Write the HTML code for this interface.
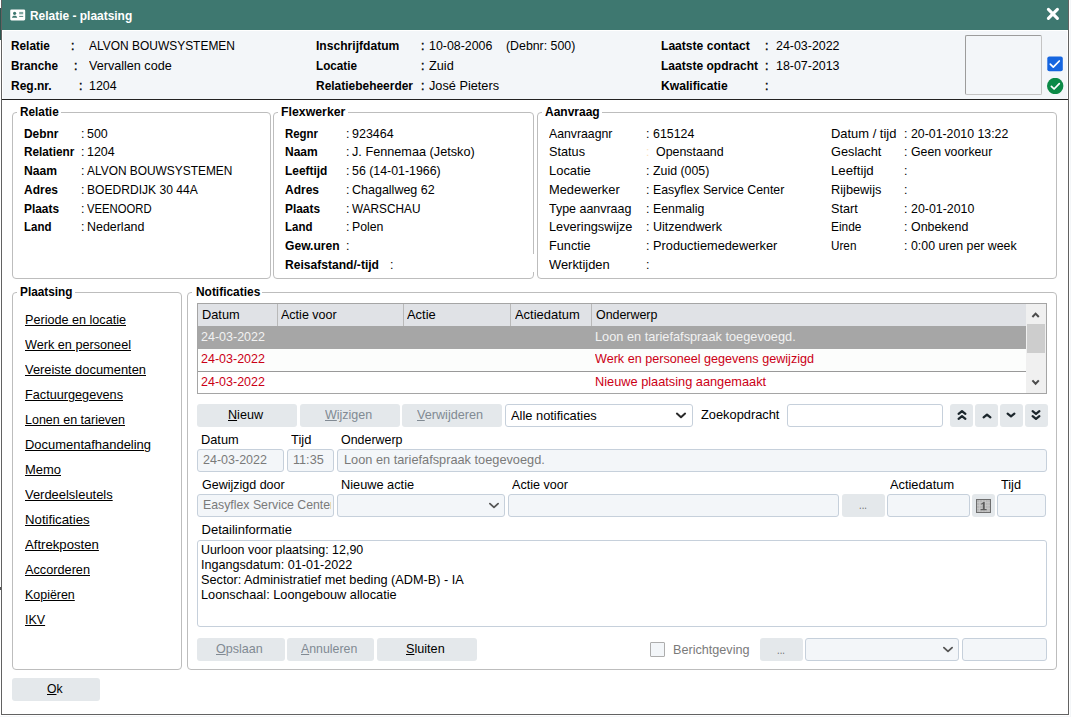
<!DOCTYPE html><html lang="nl"><head><meta charset="utf-8"><title>Relatie - plaatsing</title><style>
html,body{margin:0;padding:0}
body{width:1071px;height:717px;position:relative;overflow:hidden;background:#fff;font-family:"Liberation Sans",sans-serif;color:#000}
body>div,body>svg{position:absolute;box-sizing:border-box}
.t{position:absolute;white-space:pre;transform-origin:0 50%;display:block}
.clip{position:absolute;overflow:hidden}
u{text-decoration:underline;text-underline-offset:1px}

</style></head><body>
<div style="left:0px;top:8px;width:1px;height:32px;background:#2b5750"></div>
<div style="left:0px;top:587px;width:1px;height:3px;background:#555"></div>
<div style="left:1px;top:0px;width:1px;height:715px;background:#626262"></div>
<div style="left:1068px;top:0px;width:1px;height:715px;background:#626262"></div>
<div style="left:1px;top:713.6px;width:1068px;height:1.4px;background:#626262"></div>
<div style="left:1070px;top:0px;width:1px;height:717px;background:#f4f6f8"></div>
<div style="left:0px;top:715.5px;width:1071px;height:1.5px;background:#f4f6f8"></div>
<div style="left:2px;top:0px;width:1066px;height:30px;background:#3e7870"></div>
<div style="left:3px;top:31px;width:1064px;height:68px;background:#f3f6f9"></div>
<div style="left:2px;top:99px;width:1066px;height:1px;background:#222"></div>
<div style="left:965px;top:35px;width:77px;height:60px;border:1px solid;border-color:#9c9c9c #c4c4c4 #c4c4c4 #9c9c9c;border-radius:2px;background:#f3f6f9"></div>
<div style="left:12px;top:112px;width:259px;height:167px;border:1px solid #bdbdbd;border-radius:4px"></div>
<div style="left:16.8px;top:111px;width:44.7px;height:4px;background:#fff"></div>
<div style="left:273px;top:112px;width:261px;height:167px;border:1px solid #bdbdbd;border-radius:4px"></div>
<div style="left:277.8px;top:111px;width:70.4px;height:4px;background:#fff"></div>
<div style="left:532px;top:253.7px;width:3px;height:18.8px;background:#fff"></div>
<div style="left:537px;top:112px;width:519.5px;height:167px;border:1px solid #bdbdbd;border-radius:4px"></div>
<div style="left:541.8px;top:111px;width:60.7px;height:4px;background:#fff"></div>
<div style="left:12px;top:292px;width:170px;height:377.5px;border:1px solid #bdbdbd;border-radius:4px"></div>
<div style="left:16.8px;top:291px;width:58.5px;height:4px;background:#fff"></div>
<div style="left:187px;top:292px;width:869.5px;height:377.5px;border:1px solid #bdbdbd;border-radius:4px"></div>
<div style="left:192.2px;top:291px;width:70.3px;height:4px;background:#fff"></div>
<div style="left:197px;top:303px;width:850px;height:91px;border:1px solid #a5a5a5;background:#fff"></div>
<div style="left:198px;top:304px;width:828px;height:22px;background:#e0e2e6"></div>
<div style="left:276.5px;top:304px;width:1.0px;height:22px;background:#b9b9b9"></div>
<div style="left:402.5px;top:304px;width:1.0px;height:22px;background:#b9b9b9"></div>
<div style="left:510.3px;top:304px;width:1.0px;height:22px;background:#b9b9b9"></div>
<div style="left:591.3px;top:304px;width:1.0px;height:22px;background:#b9b9b9"></div>
<div style="left:198px;top:326px;width:828px;height:22.5px;background:#a6a6a6"></div>
<div style="left:198px;top:348.5px;width:828px;height:22.5px;background:#fcfdfc"></div>
<div style="left:198px;top:371px;width:828px;height:1px;background:#999"></div>
<div style="left:1026px;top:304px;width:20px;height:89px;background:#f0f0f0"></div>
<div style="left:1027px;top:324px;width:18px;height:29px;background:#cdcdcd"></div>
<div style="left:197.3px;top:404.3px;width:99.4px;height:22.4px;background:#e4e8eb;border-radius:3px"></div>
<div style="left:300px;top:404.3px;width:99.7px;height:22.4px;background:#e4e8eb;border-radius:3px"></div>
<div style="left:402.3px;top:404.3px;width:99.4px;height:22.4px;background:#e4e8eb;border-radius:3px"></div>
<div style="left:505.3px;top:404.3px;width:187.4px;height:22.4px;background:#fff;border:1px solid #c6d0db;border-radius:3px"></div>
<div style="left:787.3px;top:404.3px;width:155.4px;height:22.4px;background:#fff;border:1px solid #c6d0db;border-radius:3px"></div>
<div style="left:950px;top:404.3px;width:23px;height:22.4px;background:#e4e8eb;border-radius:3px"></div>
<div style="left:975px;top:404.3px;width:23px;height:22.4px;background:#e4e8eb;border-radius:3px"></div>
<div style="left:1000px;top:404.3px;width:23px;height:22.4px;background:#e4e8eb;border-radius:3px"></div>
<div style="left:1025px;top:404.3px;width:23px;height:22.4px;background:#e4e8eb;border-radius:3px"></div>
<div style="left:197.3px;top:449.3px;width:87.0px;height:22.4px;background:#f3f6f9;border:1px solid #c6d0db;border-radius:3px"></div>
<div style="left:287.3px;top:449.3px;width:47.0px;height:22.4px;background:#f3f6f9;border:1px solid #c6d0db;border-radius:3px"></div>
<div style="left:337.3px;top:449.3px;width:709.4px;height:22.4px;background:#f3f6f9;border:1px solid #c6d0db;border-radius:3px"></div>
<div style="left:197px;top:494px;width:137.3px;height:22.5px;background:#f3f6f9;border:1px solid #c6d0db;border-radius:3px"></div>
<div style="left:337.3px;top:494px;width:167.9px;height:22.5px;background:#f3f6f9;border:1px solid #c6d0db;border-radius:3px"></div>
<div style="left:508px;top:494px;width:330.7px;height:22.5px;background:#f3f6f9;border:1px solid #c6d0db;border-radius:3px"></div>
<div style="left:842.2px;top:494px;width:42.4px;height:22.5px;background:#e4e8eb;border-radius:3px"></div>
<div style="left:887.3px;top:494px;width:82.4px;height:22.5px;background:#f3f6f9;border:1px solid #c6d0db;border-radius:3px"></div>
<div style="left:972.4px;top:494px;width:22.4px;height:22.5px;background:#e4e8eb;border-radius:3px"></div>
<div style="left:997.3px;top:494px;width:48.5px;height:22.5px;background:#f3f6f9;border:1px solid #c6d0db;border-radius:3px"></div>
<div style="left:197px;top:540px;width:849.5px;height:87px;background:#fff;border:1px solid #c6d0db;border-radius:3px"></div>
<div style="left:197px;top:638.2px;width:87.6px;height:22.4px;background:#e4e8eb;border-radius:3px"></div>
<div style="left:287.4px;top:638.2px;width:86.8px;height:22.4px;background:#e4e8eb;border-radius:3px"></div>
<div style="left:377px;top:638.2px;width:100px;height:22.4px;background:#e4e8eb;border-radius:3px"></div>
<div style="left:650px;top:642.3px;width:15px;height:15.0px;background:#f3f6f9;border:1px solid #adadad;border-radius:1px"></div>
<div style="left:760.2px;top:638.2px;width:42.4px;height:22.4px;background:#e4e8eb;border-radius:3px"></div>
<div style="left:805.3px;top:638.2px;width:154.0px;height:22.4px;background:#f3f6f9;border:1px solid #c6d0db;border-radius:3px"></div>
<div style="left:962px;top:638.2px;width:84.5px;height:22.4px;background:#f3f6f9;border:1px solid #c6d0db;border-radius:3px"></div>
<div style="left:12px;top:677.8px;width:88px;height:23.2px;background:#e4e8eb;border-radius:3px"></div>
<svg style="left:10px;top:9px" width="16" height="12" viewBox="0 0 16 12"><rect x="0.2" y="0.4" width="15" height="11" rx="1.3" fill="#fff"/><circle cx="4.6" cy="4.3" r="1.6" fill="#3e7870"/><path d="M2 8.8c0-1.5 1.1-2.1 2.6-2.1s2.6.6 2.6 2.1z" fill="#3e7870"/><rect x="9.2" y="2.9" width="4" height="2.4" fill="#7fa7a1"/><rect x="9.2" y="6.9" width="4" height="0.9" fill="#3e7870"/></svg>
<svg style="left:1045px;top:6px" width="16" height="16" viewBox="0 0 16 16"><path d="M3.4 3.4l9 9M12.4 3.4l-9 9" stroke="#fff" stroke-width="3.1" stroke-linecap="round" fill="none"/></svg>
<svg style="left:1047px;top:56px" width="16" height="16" viewBox="0 0 16 16"><rect x="0.3" y="0.5" width="15.5" height="14.8" rx="2" fill="#1565e0"/><path d="M3.3 8.2l3 3 6-6.2" stroke="#fff" stroke-width="1.7" fill="none" stroke-linecap="round" stroke-linejoin="round"/></svg>
<svg style="left:1047px;top:78px" width="17" height="16" viewBox="0 0 17 16"><circle cx="8.2" cy="8" r="8.2" fill="#0b8a47"/><path d="M4.4 8.3l2.7 2.7 5.2-5.4" stroke="#fff" stroke-width="1.7" fill="none" stroke-linecap="round" stroke-linejoin="round"/></svg>
<svg style="left:1030px;top:310px" width="12" height="8" viewBox="0 0 12 8"><path d="M2.4 7L5.6 3.6L8.8 7" stroke="#4c4c4c" stroke-width="2" fill="none"/></svg>
<svg style="left:1030px;top:378px" width="12" height="8" viewBox="0 0 12 8"><path d="M2.4 2.4L5.6 5.8L8.8 2.4" stroke="#4c4c4c" stroke-width="2" fill="none"/></svg>
<svg style="left:672.8px;top:410.4px" width="16" height="12" viewBox="0 0 16 12"><path d="M3.9000000000000004 3.6l4.1 3.6999999999999997 4.1-3.6999999999999997" stroke="#2a2a2a" stroke-width="2" fill="none" stroke-linecap="round" stroke-linejoin="round"/></svg>
<svg style="left:953.5px;top:406.9px" width="16" height="16" viewBox="-8 -8 16 16"><path d="M-3.4 -1.1L0 -3.9L3.4 -1.1M-3.4 3.9L0 1.1L3.4 3.9" stroke="#1c262c" stroke-width="2.2" fill="none" stroke-linecap="round" stroke-linejoin="round"/></svg>
<svg style="left:978.5px;top:407.6px" width="16" height="16" viewBox="-8 -8 16 16"><path d="M-3.4 1.4L0 -1.4L3.4 1.4" stroke="#1c262c" stroke-width="2.2" fill="none" stroke-linecap="round" stroke-linejoin="round"/></svg>
<svg style="left:1003.4px;top:407.3px" width="16" height="16" viewBox="-8 -8 16 16"><path d="M-3.4 -1.4L0 1.4L3.4 -1.4" stroke="#1c262c" stroke-width="2.2" fill="none" stroke-linecap="round" stroke-linejoin="round"/></svg>
<svg style="left:1028.4px;top:406.8px" width="16" height="16" viewBox="-8 -8 16 16"><path d="M-3.4 -3.9L0 -1.1L3.4 -3.9M-3.4 1.1L0 3.9L3.4 1.1" stroke="#1c262c" stroke-width="2.2" fill="none" stroke-linecap="round" stroke-linejoin="round"/></svg>
<svg style="left:486.3px;top:499.6px" width="16" height="12" viewBox="0 0 16 12"><path d="M3.9000000000000004 3.6l4.1 3.6999999999999997 4.1-3.6999999999999997" stroke="#555" stroke-width="1.8" fill="none" stroke-linecap="round" stroke-linejoin="round"/></svg>
<svg style="left:976px;top:499px" width="15" height="14" viewBox="0 0 15 14"><rect x="0.5" y="0.5" width="14" height="13" fill="#b7b7b7" stroke="#6e6e6e"/><path d="M3.5 1v12M6.5 1v12M9.5 1v12M12 1v12M1 3.5h13M1 6.5h13M1 9.5h13M1 12h13" stroke="#cdcdcd" stroke-width="0.6"/><path d="M5.3 4.6l2.2-1.6h1.2v7h1.9v1.2H4.6V10h2.2V4.8l-1.5 1z" fill="#5c5c5c"/></svg>
<svg style="left:940.1px;top:644.2px" width="16" height="12" viewBox="0 0 16 12"><path d="M3.9000000000000004 3.6l4.1 3.6999999999999997 4.1-3.6999999999999997" stroke="#555" stroke-width="1.8" fill="none" stroke-linecap="round" stroke-linejoin="round"/></svg>
<span id="t0" class="t" style="left:30px;top:9.0px;font-size:13px;line-height:13px;font-weight:bold;color:#fff;transform:scaleX(0.9187);">Relatie - plaatsing</span>
<span id="t1" class="t" style="left:11px;top:39.0px;font-size:13px;line-height:13px;font-weight:bold;transform:scaleX(0.9099);">Relatie</span>
<span id="t2" class="t" style="left:71.1px;top:39.0px;font-size:13px;line-height:13px;-webkit-text-stroke:0.45px #000;transform:scaleX(0.9450);">:</span>
<span id="t3" class="t" style="left:11px;top:59.0px;font-size:13px;line-height:13px;font-weight:bold;transform:scaleX(0.9033);">Branche</span>
<span id="t4" class="t" style="left:74.1px;top:59.0px;font-size:13px;line-height:13px;-webkit-text-stroke:0.45px #000;transform:scaleX(0.9450);">:</span>
<span id="t5" class="t" style="left:11px;top:79.0px;font-size:13px;line-height:13px;font-weight:bold;transform:scaleX(0.9234);">Reg.nr.</span>
<span id="t6" class="t" style="left:79.1px;top:79.0px;font-size:13px;line-height:13px;-webkit-text-stroke:0.45px #000;transform:scaleX(0.9450);">:</span>
<span id="t7" class="t" style="left:89px;top:39.0px;font-size:13px;line-height:13px;transform:scaleX(0.9200);">ALVON BOUWSYSTEMEN</span>
<span id="t8" class="t" style="left:89px;top:59.0px;font-size:13px;line-height:13px;transform:scaleX(0.9697);">Vervallen code</span>
<span id="t9" class="t" style="left:89px;top:79.0px;font-size:13px;line-height:13px;transform:scaleX(0.9578);">1204</span>
<span id="t10" class="t" style="left:315.7px;top:39.0px;font-size:13px;line-height:13px;font-weight:bold;transform:scaleX(0.9299);">Inschrijfdatum</span>
<span id="t11" class="t" style="left:420.8px;top:39.0px;font-size:13px;line-height:13px;-webkit-text-stroke:0.45px #000;transform:scaleX(0.9450);">:</span>
<span id="t12" class="t" style="left:315.7px;top:59.0px;font-size:13px;line-height:13px;font-weight:bold;transform:scaleX(0.9008);">Locatie</span>
<span id="t13" class="t" style="left:420.8px;top:59.0px;font-size:13px;line-height:13px;-webkit-text-stroke:0.45px #000;transform:scaleX(0.9450);">:</span>
<span id="t14" class="t" style="left:315.7px;top:79.0px;font-size:13px;line-height:13px;font-weight:bold;transform:scaleX(0.9194);">Relatiebeheerder</span>
<span id="t15" class="t" style="left:420.8px;top:79.0px;font-size:13px;line-height:13px;-webkit-text-stroke:0.45px #000;transform:scaleX(0.9450);">:</span>
<span id="t16" class="t" style="left:429.3px;top:39.0px;font-size:13px;line-height:13px;transform:scaleX(0.9534);">10-08-2006</span>
<span id="t17" class="t" style="left:506px;top:39.0px;font-size:13px;line-height:13px;transform:scaleX(0.9495);">(Debnr: 500)</span>
<span id="t18" class="t" style="left:429.3px;top:59.0px;font-size:13px;line-height:13px;transform:scaleX(0.9764);">Zuid</span>
<span id="t19" class="t" style="left:429.3px;top:79.0px;font-size:13px;line-height:13px;transform:scaleX(0.9784);">José Pieters</span>
<span id="t20" class="t" style="left:661.3px;top:39.0px;font-size:13px;line-height:13px;font-weight:bold;transform:scaleX(0.9300);">Laatste contact</span>
<span id="t21" class="t" style="left:765.1px;top:39.0px;font-size:13px;line-height:13px;-webkit-text-stroke:0.45px #000;transform:scaleX(0.9450);">:</span>
<span id="t22" class="t" style="left:661.3px;top:59.0px;font-size:13px;line-height:13px;font-weight:bold;transform:scaleX(0.9260);">Laatste opdracht</span>
<span id="t23" class="t" style="left:765.1px;top:59.0px;font-size:13px;line-height:13px;-webkit-text-stroke:0.45px #000;transform:scaleX(0.9450);">:</span>
<span id="t24" class="t" style="left:661.3px;top:79.0px;font-size:13px;line-height:13px;font-weight:bold;transform:scaleX(0.9325);">Kwalificatie</span>
<span id="t25" class="t" style="left:765.1px;top:79.0px;font-size:13px;line-height:13px;-webkit-text-stroke:0.45px #000;transform:scaleX(0.9450);">:</span>
<span id="t26" class="t" style="left:775.5px;top:39.0px;font-size:13px;line-height:13px;transform:scaleX(0.9549);">24-03-2022</span>
<span id="t27" class="t" style="left:775.5px;top:59.0px;font-size:13px;line-height:13px;transform:scaleX(0.9549);">18-07-2013</span>
<span id="t28" class="t" style="left:20.3px;top:105.0px;font-size:13px;line-height:13px;font-weight:bold;transform:scaleX(0.9076);">Relatie</span>
<span id="t29" class="t" style="left:281.3px;top:105.0px;font-size:13px;line-height:13px;font-weight:bold;transform:scaleX(0.9479);">Flexwerker</span>
<span id="t30" class="t" style="left:545.3px;top:105.0px;font-size:13px;line-height:13px;font-weight:bold;transform:scaleX(0.9232);">Aanvraag</span>
<span id="t31" class="t" style="left:20.3px;top:285.0px;font-size:13px;line-height:13px;font-weight:bold;transform:scaleX(0.9084);">Plaatsing</span>
<span id="t32" class="t" style="left:195.7px;top:285.0px;font-size:13px;line-height:13px;font-weight:bold;transform:scaleX(0.9175);">Notificaties</span>
<span id="t33" class="t" style="left:24.3px;top:127.0px;font-size:13px;line-height:13px;font-weight:bold;transform:scaleX(0.9158);">Debnr</span>
<span id="t34" class="t" style="left:80.5px;top:127.0px;font-size:13px;line-height:13px;transform:scaleX(0.9450);">:</span>
<span id="t35" class="t" style="left:87.3px;top:127.0px;font-size:13px;line-height:13px;transform:scaleX(0.9538);">500</span>
<span id="t36" class="t" style="left:24.3px;top:145.1px;font-size:13px;line-height:13px;font-weight:bold;transform:scaleX(0.9058);">Relatienr</span>
<span id="t37" class="t" style="left:80.5px;top:145.1px;font-size:13px;line-height:13px;transform:scaleX(0.9450);">:</span>
<span id="t38" class="t" style="left:87.3px;top:145.1px;font-size:13px;line-height:13px;transform:scaleX(0.9578);">1204</span>
<span id="t39" class="t" style="left:24.3px;top:164.3px;font-size:13px;line-height:13px;font-weight:bold;transform:scaleX(0.9316);">Naam</span>
<span id="t40" class="t" style="left:80.5px;top:164.3px;font-size:13px;line-height:13px;transform:scaleX(0.9450);">:</span>
<span id="t41" class="t" style="left:87.3px;top:164.3px;font-size:13px;line-height:13px;transform:scaleX(0.9163);">ALVON BOUWSYSTEMEN</span>
<span id="t42" class="t" style="left:24.3px;top:183.0px;font-size:13px;line-height:13px;font-weight:bold;transform:scaleX(0.9224);">Adres</span>
<span id="t43" class="t" style="left:80.5px;top:183.0px;font-size:13px;line-height:13px;transform:scaleX(0.9450);">:</span>
<span id="t44" class="t" style="left:87.3px;top:183.0px;font-size:13px;line-height:13px;transform:scaleX(0.9285);">BOEDRDIJK 30 44A</span>
<span id="t45" class="t" style="left:24.3px;top:201.7px;font-size:13px;line-height:13px;font-weight:bold;transform:scaleX(0.9135);">Plaats</span>
<span id="t46" class="t" style="left:80.5px;top:201.7px;font-size:13px;line-height:13px;transform:scaleX(0.9450);">:</span>
<span id="t47" class="t" style="left:87.3px;top:201.7px;font-size:13px;line-height:13px;transform:scaleX(0.8696);">VEENOORD</span>
<span id="t48" class="t" style="left:24.3px;top:220.4px;font-size:13px;line-height:13px;font-weight:bold;transform:scaleX(0.8821);">Land</span>
<span id="t49" class="t" style="left:80.5px;top:220.4px;font-size:13px;line-height:13px;transform:scaleX(0.9450);">:</span>
<span id="t50" class="t" style="left:87.3px;top:220.4px;font-size:13px;line-height:13px;transform:scaleX(0.9567);">Nederland</span>
<span id="t51" class="t" style="left:285.3px;top:127.0px;font-size:13px;line-height:13px;font-weight:bold;transform:scaleX(0.8785);">Regnr</span>
<span id="t52" class="t" style="left:345.5px;top:127.0px;font-size:13px;line-height:13px;transform:scaleX(0.9450);">:</span>
<span id="t53" class="t" style="left:352.3px;top:127.0px;font-size:13px;line-height:13px;transform:scaleX(0.9610);">923464</span>
<span id="t54" class="t" style="left:285.3px;top:145.1px;font-size:13px;line-height:13px;font-weight:bold;transform:scaleX(0.9232);">Naam</span>
<span id="t55" class="t" style="left:345.5px;top:145.1px;font-size:13px;line-height:13px;transform:scaleX(0.9450);">:</span>
<span id="t56" class="t" style="left:352.3px;top:145.1px;font-size:13px;line-height:13px;transform:scaleX(0.9760);">J. Fennemaa (Jetsko)</span>
<span id="t57" class="t" style="left:285.3px;top:164.3px;font-size:13px;line-height:13px;font-weight:bold;transform:scaleX(0.9171);">Leeftijd</span>
<span id="t58" class="t" style="left:345.5px;top:164.3px;font-size:13px;line-height:13px;transform:scaleX(0.9450);">:</span>
<span id="t59" class="t" style="left:352.3px;top:164.3px;font-size:13px;line-height:13px;transform:scaleX(0.9514);">56 (14-01-1966)</span>
<span id="t60" class="t" style="left:285.3px;top:183.0px;font-size:13px;line-height:13px;font-weight:bold;transform:scaleX(0.9224);">Adres</span>
<span id="t61" class="t" style="left:345.5px;top:183.0px;font-size:13px;line-height:13px;transform:scaleX(0.9450);">:</span>
<span id="t62" class="t" style="left:352.3px;top:183.0px;font-size:13px;line-height:13px;transform:scaleX(0.9615);">Chagallweg 62</span>
<span id="t63" class="t" style="left:285.3px;top:201.7px;font-size:13px;line-height:13px;font-weight:bold;transform:scaleX(0.9135);">Plaats</span>
<span id="t64" class="t" style="left:345.5px;top:201.7px;font-size:13px;line-height:13px;transform:scaleX(0.9450);">:</span>
<span id="t65" class="t" style="left:352.3px;top:201.7px;font-size:13px;line-height:13px;transform:scaleX(0.9077);">WARSCHAU</span>
<span id="t66" class="t" style="left:285.3px;top:220.4px;font-size:13px;line-height:13px;font-weight:bold;transform:scaleX(0.8821);">Land</span>
<span id="t67" class="t" style="left:345.5px;top:220.4px;font-size:13px;line-height:13px;transform:scaleX(0.9450);">:</span>
<span id="t68" class="t" style="left:352.3px;top:220.4px;font-size:13px;line-height:13px;transform:scaleX(0.9444);">Polen</span>
<span id="t69" class="t" style="left:285.3px;top:239.0px;font-size:13px;line-height:13px;font-weight:bold;transform:scaleX(0.9308);">Gew.uren</span>
<span id="t70" class="t" style="left:345.5px;top:239.0px;font-size:13px;line-height:13px;transform:scaleX(0.9450);">:</span>
<span id="t71" class="t" style="left:285.3px;top:257.7px;font-size:13px;line-height:13px;font-weight:bold;transform:scaleX(0.9295);">Reisafstand/-tijd</span>
<span id="t72" class="t" style="left:390.2px;top:257.7px;font-size:13px;line-height:13px;transform:scaleX(0.9450);">:</span>
<span id="t73" class="t" style="left:549.3px;top:127.0px;font-size:13px;line-height:13px;transform:scaleX(0.9432);">Aanvraagnr</span>
<span id="t74" class="t" style="left:646.2px;top:127.0px;font-size:13px;line-height:13px;transform:scaleX(0.9450);">:</span>
<span id="t75" class="t" style="left:652.7px;top:127.0px;font-size:13px;line-height:13px;transform:scaleX(0.9518);">615124</span>
<span id="t76" class="t" style="left:549.3px;top:145.1px;font-size:13px;line-height:13px;transform:scaleX(0.9767);">Status</span>
<span id="t77" class="t" style="left:646.2px;top:145.1px;font-size:13px;line-height:13px;color:#fbe3bd;transform:scaleX(0.9450);">:</span>
<span id="t78" class="t" style="left:655.7px;top:145.1px;font-size:13px;line-height:13px;transform:scaleX(0.9542);">Openstaand</span>
<span id="t79" class="t" style="left:549.3px;top:164.3px;font-size:13px;line-height:13px;transform:scaleX(0.9947);">Locatie</span>
<span id="t80" class="t" style="left:646.2px;top:164.3px;font-size:13px;line-height:13px;transform:scaleX(0.9450);">:</span>
<span id="t81" class="t" style="left:652.7px;top:164.3px;font-size:13px;line-height:13px;transform:scaleX(0.9502);">Zuid (005)</span>
<span id="t82" class="t" style="left:549.3px;top:183.0px;font-size:13px;line-height:13px;transform:scaleX(0.9884);">Medewerker</span>
<span id="t83" class="t" style="left:646.2px;top:183.0px;font-size:13px;line-height:13px;transform:scaleX(0.9450);">:</span>
<span id="t84" class="t" style="left:652.7px;top:183.0px;font-size:13px;line-height:13px;transform:scaleX(0.9464);">Easyflex Service Center</span>
<span id="t85" class="t" style="left:549.3px;top:201.7px;font-size:13px;line-height:13px;transform:scaleX(0.9580);">Type aanvraag</span>
<span id="t86" class="t" style="left:646.2px;top:201.7px;font-size:13px;line-height:13px;transform:scaleX(0.9450);">:</span>
<span id="t87" class="t" style="left:652.7px;top:201.7px;font-size:13px;line-height:13px;transform:scaleX(0.9464);">Eenmalig</span>
<span id="t88" class="t" style="left:549.3px;top:220.4px;font-size:13px;line-height:13px;transform:scaleX(0.9781);">Leveringswijze</span>
<span id="t89" class="t" style="left:646.2px;top:220.4px;font-size:13px;line-height:13px;transform:scaleX(0.9450);">:</span>
<span id="t90" class="t" style="left:652.7px;top:220.4px;font-size:13px;line-height:13px;transform:scaleX(0.9646);">Uitzendwerk</span>
<span id="t91" class="t" style="left:549.3px;top:239.0px;font-size:13px;line-height:13px;transform:scaleX(0.9779);">Functie</span>
<span id="t92" class="t" style="left:646.2px;top:239.0px;font-size:13px;line-height:13px;transform:scaleX(0.9450);">:</span>
<span id="t93" class="t" style="left:652.7px;top:239.0px;font-size:13px;line-height:13px;transform:scaleX(0.9830);">Productiemedewerker</span>
<span id="t94" class="t" style="left:549.3px;top:257.7px;font-size:13px;line-height:13px;transform:scaleX(0.9920);">Werktijden</span>
<span id="t95" class="t" style="left:646.2px;top:257.7px;font-size:13px;line-height:13px;transform:scaleX(0.9450);">:</span>
<span id="t96" class="t" style="left:831.3px;top:127.0px;font-size:13px;line-height:13px;transform:scaleX(0.9947);">Datum / tijd</span>
<span id="t97" class="t" style="left:904.2px;top:127.0px;font-size:13px;line-height:13px;transform:scaleX(0.9450);">:</span>
<span id="t98" class="t" style="left:910.7px;top:127.0px;font-size:13px;line-height:13px;transform:scaleX(0.9478);">20-01-2010 13:22</span>
<span id="t99" class="t" style="left:831.3px;top:145.1px;font-size:13px;line-height:13px;transform:scaleX(0.9822);">Geslacht</span>
<span id="t100" class="t" style="left:904.2px;top:145.1px;font-size:13px;line-height:13px;transform:scaleX(0.9450);">:</span>
<span id="t101" class="t" style="left:910.7px;top:145.1px;font-size:13px;line-height:13px;transform:scaleX(0.9453);">Geen voorkeur</span>
<span id="t102" class="t" style="left:831.3px;top:164.3px;font-size:13px;line-height:13px;transform:scaleX(1.0186);">Leeftijd</span>
<span id="t103" class="t" style="left:904.2px;top:164.3px;font-size:13px;line-height:13px;transform:scaleX(0.9450);">:</span>
<span id="t104" class="t" style="left:831.3px;top:183.0px;font-size:13px;line-height:13px;transform:scaleX(0.9825);">Rijbewijs</span>
<span id="t105" class="t" style="left:904.2px;top:183.0px;font-size:13px;line-height:13px;transform:scaleX(0.9450);">:</span>
<span id="t106" class="t" style="left:831.3px;top:201.7px;font-size:13px;line-height:13px;transform:scaleX(0.9720);">Start</span>
<span id="t107" class="t" style="left:904.2px;top:201.7px;font-size:13px;line-height:13px;transform:scaleX(0.9450);">:</span>
<span id="t108" class="t" style="left:910.7px;top:201.7px;font-size:13px;line-height:13px;transform:scaleX(0.9519);">20-01-2010</span>
<span id="t109" class="t" style="left:831.3px;top:220.4px;font-size:13px;line-height:13px;transform:scaleX(0.9143);">Einde</span>
<span id="t110" class="t" style="left:904.2px;top:220.4px;font-size:13px;line-height:13px;transform:scaleX(0.9450);">:</span>
<span id="t111" class="t" style="left:910.7px;top:220.4px;font-size:13px;line-height:13px;transform:scaleX(0.9550);">Onbekend</span>
<span id="t112" class="t" style="left:831.3px;top:239.0px;font-size:13px;line-height:13px;transform:scaleX(0.9011);">Uren</span>
<span id="t113" class="t" style="left:904.2px;top:239.0px;font-size:13px;line-height:13px;transform:scaleX(0.9450);">:</span>
<span id="t114" class="t" style="left:910.7px;top:239.0px;font-size:13px;line-height:13px;transform:scaleX(0.9488);">0:00 uren per week</span>
<span id="t115" class="t" style="left:25px;top:313.0px;font-size:13px;line-height:13px;transform:scaleX(0.9704);text-decoration:underline;text-underline-offset:1px;">Periode en locatie</span>
<span id="t116" class="t" style="left:25px;top:338.0px;font-size:13px;line-height:13px;transform:scaleX(0.9736);text-decoration:underline;text-underline-offset:1px;">Werk en personeel</span>
<span id="t117" class="t" style="left:25px;top:363.0px;font-size:13px;line-height:13px;transform:scaleX(0.9907);text-decoration:underline;text-underline-offset:1px;">Vereiste documenten</span>
<span id="t118" class="t" style="left:25px;top:388.0px;font-size:13px;line-height:13px;transform:scaleX(0.9756);text-decoration:underline;text-underline-offset:1px;">Factuurgegevens</span>
<span id="t119" class="t" style="left:25px;top:413.0px;font-size:13px;line-height:13px;transform:scaleX(0.9607);text-decoration:underline;text-underline-offset:1px;">Lonen en tarieven</span>
<span id="t120" class="t" style="left:25px;top:438.0px;font-size:13px;line-height:13px;transform:scaleX(0.9962);text-decoration:underline;text-underline-offset:1px;">Documentafhandeling</span>
<span id="t121" class="t" style="left:25px;top:463.0px;font-size:13px;line-height:13px;transform:scaleX(0.9965);text-decoration:underline;text-underline-offset:1px;">Memo</span>
<span id="t122" class="t" style="left:25px;top:488.0px;font-size:13px;line-height:13px;transform:scaleX(0.9946);text-decoration:underline;text-underline-offset:1px;">Verdeelsleutels</span>
<span id="t123" class="t" style="left:25px;top:513.0px;font-size:13px;line-height:13px;transform:scaleX(1.0161);text-decoration:underline;text-underline-offset:1px;">Notificaties</span>
<span id="t124" class="t" style="left:25px;top:538.0px;font-size:13px;line-height:13px;transform:scaleX(1.0123);text-decoration:underline;text-underline-offset:1px;">Aftrekposten</span>
<span id="t125" class="t" style="left:25px;top:563.0px;font-size:13px;line-height:13px;transform:scaleX(0.9777);text-decoration:underline;text-underline-offset:1px;">Accorderen</span>
<span id="t126" class="t" style="left:25px;top:588.0px;font-size:13px;line-height:13px;transform:scaleX(0.9568);text-decoration:underline;text-underline-offset:1px;">Kopiëren</span>
<span id="t127" class="t" style="left:25px;top:613.0px;font-size:13px;line-height:13px;transform:scaleX(0.9586);text-decoration:underline;text-underline-offset:1px;">IKV</span>
<span id="t128" class="t" style="left:202.3px;top:308.0px;font-size:13px;line-height:13px;transform:scaleX(0.9844);">Datum</span>
<span id="t129" class="t" style="left:281px;top:308.0px;font-size:13px;line-height:13px;transform:scaleX(0.9635);">Actie voor</span>
<span id="t130" class="t" style="left:407px;top:308.0px;font-size:13px;line-height:13px;transform:scaleX(0.9929);">Actie</span>
<span id="t131" class="t" style="left:515px;top:308.0px;font-size:13px;line-height:13px;transform:scaleX(0.9947);">Actiedatum</span>
<span id="t132" class="t" style="left:596.3px;top:308.0px;font-size:13px;line-height:13px;transform:scaleX(0.9547);">Onderwerp</span>
<span id="t133" class="t" style="left:201px;top:329.7px;font-size:13px;line-height:13px;color:#f2f2f2;transform:scaleX(0.9624);">24-03-2022</span>
<span id="t134" class="t" style="left:595.3px;top:329.7px;font-size:13px;line-height:13px;color:#f2f2f2;transform:scaleX(0.9812);">Loon en tariefafspraak toegevoegd.</span>
<span id="t135" class="t" style="left:201px;top:352.3px;font-size:13px;line-height:13px;color:#cb0016;transform:scaleX(0.9624);">24-03-2022</span>
<span id="t136" class="t" style="left:595.3px;top:352.3px;font-size:13px;line-height:13px;color:#cb0016;transform:scaleX(0.9692);">Werk en personeel gegevens gewijzigd</span>
<span id="t137" class="t" style="left:201px;top:374.7px;font-size:13px;line-height:13px;color:#cb0016;transform:scaleX(0.9624);">24-03-2022</span>
<span id="t138" class="t" style="left:595.3px;top:374.7px;font-size:13px;line-height:13px;color:#cb0016;transform:scaleX(0.9824);">Nieuwe plaatsing aangemaakt</span>
<span id="t139" class="t" style="left:228.3px;top:408.0px;font-size:13px;line-height:13px;transform:scaleX(0.9684);"><u>N</u>ieuw</span>
<span id="t140" class="t" style="left:325.3px;top:408.0px;font-size:13px;line-height:13px;color:#818a93;transform:scaleX(0.9605);"><u>W</u>ijzigen</span>
<span id="t141" class="t" style="left:417px;top:408.0px;font-size:13px;line-height:13px;color:#818a93;transform:scaleX(0.9713);"><u>V</u>erwijderen</span>
<span id="t142" class="t" style="left:511.3px;top:409.0px;font-size:13px;line-height:13px;transform:scaleX(0.9883);">Alle notificaties</span>
<span id="t143" class="t" style="left:701.3px;top:408.0px;font-size:13px;line-height:13px;transform:scaleX(0.9862);">Zoekopdracht</span>
<span id="t144" class="t" style="left:201.3px;top:433.3px;font-size:13px;line-height:13px;transform:scaleX(0.9844);">Datum</span>
<span id="t145" class="t" style="left:290.7px;top:433.3px;font-size:13px;line-height:13px;transform:scaleX(0.9918);">Tijd</span>
<span id="t146" class="t" style="left:341px;top:433.3px;font-size:13px;line-height:13px;transform:scaleX(0.9563);">Onderwerp</span>
<span id="t147" class="t" style="left:203.3px;top:453.0px;font-size:13px;line-height:13px;color:#7a7a7a;transform:scaleX(0.9624);">24-03-2022</span>
<span id="t148" class="t" style="left:293.3px;top:453.0px;font-size:13px;line-height:13px;color:#7a7a7a;transform:scaleX(0.9722);">11:35</span>
<span id="t149" class="t" style="left:343.5px;top:453.0px;font-size:13px;line-height:13px;color:#7a7a7a;transform:scaleX(0.9817);">Loon en tariefafspraak toegevoegd.</span>
<span id="t150" class="t" style="left:201.6px;top:477.8px;font-size:13px;line-height:13px;transform:scaleX(0.9616);">Gewijzigd door</span>
<span id="t151" class="t" style="left:341.4px;top:477.8px;font-size:13px;line-height:13px;transform:scaleX(0.9820);">Nieuwe actie</span>
<span id="t152" class="t" style="left:512px;top:477.8px;font-size:13px;line-height:13px;transform:scaleX(0.9669);">Actie voor</span>
<span id="t153" class="t" style="left:890.4px;top:477.8px;font-size:13px;line-height:13px;transform:scaleX(0.9854);">Actiedatum</span>
<span id="t154" class="t" style="left:1000.7px;top:477.8px;font-size:13px;line-height:13px;transform:scaleX(0.9771);">Tijd</span>
<span id="t155" class="t" style="left:858.8px;top:499.45px;font-size:12px;line-height:12px;color:#707070;transform:scaleX(0.7888);">...</span>
<div class="clip" style="left:203.4px;top:494.9px;width:127.9px;height:19px"><span id="t156" class="t" style="left:0;top:3px;font-size:13px;line-height:13px;color:#7a7a7a;transform:scaleX(0.9457);">Easyflex Service Center</span></div>
<span id="t157" class="t" style="left:201.6px;top:522.7px;font-size:13px;line-height:13px;">Detailinformatie</span>
<span id="t158" class="t" style="left:201px;top:542.7px;font-size:13px;line-height:13px;transform:scaleX(0.9550);">Uurloon voor plaatsing: 12,90</span>
<span id="t159" class="t" style="left:201px;top:558.0px;font-size:13px;line-height:13px;transform:scaleX(0.9685);">Ingangsdatum: 01-01-2022</span>
<span id="t160" class="t" style="left:201px;top:572.5px;font-size:13px;line-height:13px;transform:scaleX(0.9778);">Sector: Administratief met beding (ADM-B) - IA</span>
<span id="t161" class="t" style="left:201px;top:587.5px;font-size:13px;line-height:13px;transform:scaleX(0.9805);">Loonschaal: Loongebouw allocatie</span>
<span id="t162" class="t" style="left:216px;top:641.9px;font-size:13px;line-height:13px;color:#818a93;transform:scaleX(0.9662);"><u>O</u>pslaan</span>
<span id="t163" class="t" style="left:301.2px;top:641.9px;font-size:13px;line-height:13px;color:#818a93;transform:scaleX(0.9497);"><u>A</u>nnuleren</span>
<span id="t164" class="t" style="left:406.2px;top:641.9px;font-size:13px;line-height:13px;transform:scaleX(0.9736);"><u>S</u>luiten</span>
<span id="t165" class="t" style="left:673.3px;top:642.7px;font-size:13px;line-height:13px;color:#7a7a7a;transform:scaleX(0.9710);">Berichtgeving</span>
<span id="t166" class="t" style="left:776.8px;top:643.85px;font-size:12px;line-height:12px;color:#707070;transform:scaleX(0.7888);">...</span>
<span id="t167" class="t" style="left:46.8px;top:682.2px;font-size:13px;line-height:13px;transform:scaleX(0.9383);"><u>O</u>k</span>
</body></html>
